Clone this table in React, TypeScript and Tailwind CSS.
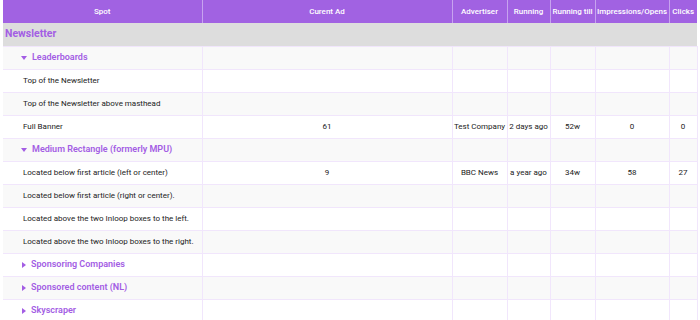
import React from "react";

type Row =
  | { kind: "group"; label: string; open: boolean }
  | {
      kind: "spot";
      label: string;
      ad?: string;
      advertiser?: string;
      running?: string;
      till?: string;
      impressions?: string;
      clicks?: string;
    };

const rows: Row[] = [
  { kind: "group", label: "Leaderboards", open: true },
  { kind: "spot", label: "Top of the Newsletter" },
  { kind: "spot", label: "Top of the Newsletter above masthead" },
  {
    kind: "spot",
    label: "Full Banner",
    ad: "61",
    advertiser: "Test Company",
    running: "2 days ago",
    till: "52w",
    impressions: "0",
    clicks: "0",
  },
  { kind: "group", label: "Medium Rectangle (formerly MPU)", open: true },
  {
    kind: "spot",
    label: "Located below first article (left or center)",
    ad: "9",
    advertiser: "BBC News",
    running: "a year ago",
    till: "34w",
    impressions: "58",
    clicks: "27",
  },
  { kind: "spot", label: "Located below first article (right or center)." },
  { kind: "spot", label: "Located above the two Inloop boxes to the left." },
  { kind: "spot", label: "Located above the two Inloop boxes to the right." },
  { kind: "group", label: "Sponsoring Companies", open: false },
  { kind: "group", label: "Sponsored content (NL)", open: false },
  { kind: "group", label: "Skyscraper", open: false },
];

const headers = ["Spot", "Curent Ad", "Advertiser", "Running", "Running till", "Impressions/Opens", "Clicks"];

function Caret({ open }: { open: boolean }) {
  return open ? (
    <svg width="6" height="4" viewBox="0 0 6 4" className="fill-[#a35de4]">
      <path d="M0 0h6L3 4z" />
    </svg>
  ) : (
    <svg width="4" height="6" viewBox="0 0 4 6" className="fill-[#a35de4]">
      <path d="M0 0v6l4-3z" />
    </svg>
  );
}

const cell = "border-l border-[#f1e6fc] text-center";

export default function App() {
  return (
    <div className="w-[700px] h-[320px] overflow-hidden bg-white px-[3px] font-['Roboto',sans-serif] text-[#222]">
      <table className="w-[694px] table-fixed border-collapse">
        <colgroup>
          <col className="w-[199px]" />
          <col className="w-[250px]" />
          <col className="w-[55px]" />
          <col className="w-[43px]" />
          <col className="w-[45px]" />
          <col className="w-[74px]" />
          <col className="w-[28px]" />
        </colgroup>
        <thead>
          <tr className="h-[23px] bg-[#a162e2] text-white text-[8px]">
            {headers.map((h, i) => (
              <th
                key={h}
                className={`p-0 text-center font-medium whitespace-nowrap ${i > 0 ? "border-l border-[#c7a3ef]" : ""}`}
              >
                {h}
              </th>
            ))}
          </tr>
        </thead>
        <tbody>
          <tr className="h-[23px] bg-[#dddddd]">
            <td colSpan={7} className="p-0 pl-[2px] text-[10.5px] font-bold text-[#a35de4]">
              Newsletter
            </td>
          </tr>
          {rows.map((r, i) => (
            <tr
              key={r.label}
              className={`h-[23px] border-t border-[#f1e6fc] text-[8px] ${i % 2 === 0 ? "bg-[#f9f9f9]" : "bg-white"}`}
            >
              {r.kind === "group" ? (
                <td className="p-0">
                  <div className={`flex items-center gap-[5px] text-[9px] font-semibold text-[#a35de4] ${r.open ? "pl-[18px]" : "pl-[19px]"}`}>
                    <Caret open={r.open} />
                    <span>{r.label}</span>
                  </div>
                </td>
              ) : (
                <td className="p-0 pl-[20px] whitespace-nowrap">{r.label}</td>
              )}
              <td className={cell}>{r.kind === "spot" ? r.ad : ""}</td>
              <td className={`${cell} whitespace-nowrap`}>{r.kind === "spot" ? r.advertiser : ""}</td>
              <td className={`${cell} whitespace-nowrap`}>{r.kind === "spot" ? r.running : ""}</td>
              <td className={cell}>{r.kind === "spot" ? r.till : ""}</td>
              <td className={cell}>{r.kind === "spot" ? r.impressions : ""}</td>
              <td className={`${cell} border-r`}>{r.kind === "spot" ? r.clicks : ""}</td>
            </tr>
          ))}
        </tbody>
      </table>
    </div>
  );
}
